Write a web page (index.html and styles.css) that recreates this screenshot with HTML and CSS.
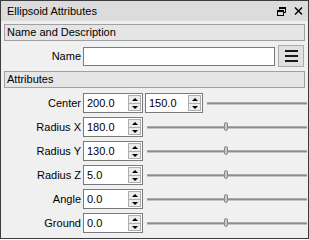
FILE: index.html
```html
<!DOCTYPE html>
<html lang="en">
<head>
  <meta charset="UTF-8" />
  <title>Ellipsoid Attributes</title>
  <link rel="stylesheet" href="styles.css">
</head>
<body>
  <div class="dock">
    <div class="titlebar">
      <span class="title">Ellipsoid Attributes</span>
      <span class="tb-icons">
        <svg width="9" height="9" viewBox="0 0 9 9">
          <path d="M2.5 2.5V0.5h6v5h-2" fill="none" stroke="#000" stroke-width="1"/>
          <rect x="2" y="0" width="7" height="2" fill="#000"/>
          <rect x="0.5" y="3.5" width="6" height="5" fill="none" stroke="#000" stroke-width="1"/>
          <rect x="0" y="3" width="7" height="2" fill="#000"/>
        </svg>
        <svg width="9" height="8" viewBox="0 0 9 8">
          <path d="M1 0.5l7 7M8 0.5l-7 7" stroke="#000" stroke-width="1.4"/>
        </svg>
      </span>
    </div>
    <div class="panel">
      <div class="section">Name and Description</div>
      <div class="row name-row">
        <label class="lbl">Name</label>
        <input class="text-input" type="text">
        <button class="menu-btn">
          <svg width="13" height="12" viewBox="0 0 13 12">
            <rect x="0" y="0" width="13" height="2" fill="#1a1a1a"/>
            <rect x="0" y="5" width="13" height="2" fill="#1a1a1a"/>
            <rect x="0" y="10" width="13" height="2" fill="#1a1a1a"/>
          </svg>
        </button>
      </div>
      <div class="section">Attributes</div>
      <div class="rows">
        <div class="row">
          <label class="lbl">Center</label>
          <div class="spin"><span class="val">200.0</span><span class="spin-btns"><span class="sb up"></span><span class="sb down"></span></span></div>
          <div class="spin narrow"><span class="val">150.0</span><span class="spin-btns"><span class="sb up"></span><span class="sb down"></span></span></div>
          <div class="slider"><span class="groove"></span></div>
        </div>
        <div class="row">
          <label class="lbl">Radius X</label>
          <div class="spin"><span class="val">180.0</span><span class="spin-btns"><span class="sb up"></span><span class="sb down"></span></span></div>
          <div class="slider"><span class="groove"></span><span class="handle"></span></div>
        </div>
        <div class="row">
          <label class="lbl">Radius Y</label>
          <div class="spin"><span class="val">130.0</span><span class="spin-btns"><span class="sb up"></span><span class="sb down"></span></span></div>
          <div class="slider"><span class="groove"></span><span class="handle"></span></div>
        </div>
        <div class="row">
          <label class="lbl">Radius Z</label>
          <div class="spin"><span class="val">5.0</span><span class="spin-btns"><span class="sb up"></span><span class="sb down"></span></span></div>
          <div class="slider"><span class="groove"></span><span class="handle"></span></div>
        </div>
        <div class="row">
          <label class="lbl">Angle</label>
          <div class="spin"><span class="val">0.0</span><span class="spin-btns"><span class="sb up"></span><span class="sb down"></span></span></div>
          <div class="slider"><span class="groove"></span><span class="handle"></span></div>
        </div>
        <div class="row">
          <label class="lbl">Ground</label>
          <div class="spin"><span class="val">0.0</span><span class="spin-btns"><span class="sb up"></span><span class="sb down"></span></span></div>
          <div class="slider"><span class="groove"></span><span class="handle"></span></div>
        </div>
      </div>
    </div>
  </div>
</body>
</html>
```
FILE: styles.css
```css
* { box-sizing:border-box; margin:0; padding:0; }
body {
  background:#ffffff;
  font-family:"Liberation Sans", Arial, sans-serif;
  font-size:11px; color:#000;
}
.dock {
  width:309px; height:239px;
  border:1px solid #3c3c3c;
  background:#f0f0f0;
}
.titlebar {
  height:20px; background:#dcdcdc;
  display:flex; align-items:center;
  justify-content:space-between;
  padding:0 5px 0 6px;
}
.title { line-height:20px; }
.tb-icons { display:flex; align-items:center; gap:8px; }
.tb-icons svg { display:block; }

.panel { padding:3px 3px 0 3px; }
.section {
  height:17px; line-height:15px;
  border:1px solid #a0a0a0;
  background:#e5e5e5;
  padding-left:2px;
}
.row {
  display:flex; align-items:center;
  height:20px;
}
.lbl {
  width:77px; margin-right:2px;
  text-align:right; white-space:nowrap;
}
.name-row { height:22px; margin:4px 0 4px; }
.text-input {
  width:192px; height:19px;
  border:1px solid #7a7a7a; background:#fff;
  outline:none;
}
.menu-btn {
  width:26px; height:22px; margin-left:3px;
  border:1px solid #adadad; background:#e1e1e1;
  display:flex; align-items:center; justify-content:center;
}
.menu-btn svg { display:block; }

.rows {
  display:flex; flex-direction:column; gap:4px;
  margin-top:5px;
}
.spin {
  width:60px; height:20px;
  border:1px solid #7a7a7a; background:#fff;
  display:flex; align-items:center;
  padding:1px 1px 1px 3px;
}
.spin.narrow { width:58px; margin-left:2px; }
.val { flex:1; line-height:16px; }
.spin-btns {
  display:flex; flex-direction:column;
  width:13px; height:16px;
}
.sb {
  flex:1; position:relative;
  border:1px solid #adadad; background:#ececec;
}
.sb.down { border-top:none; }
.sb::after {
  content:""; position:absolute;
  left:3px; width:0; height:0;
  border-left:3px solid transparent;
  border-right:3px solid transparent;
}
.sb.up::after { top:2px; border-bottom:3px solid #000; }
.sb.down::after { top:2px; border-top:3px solid #000; }

.slider {
  flex:1; height:20px; position:relative;
  margin-left:4px; margin-right:-2px;
  display:flex; align-items:center;
}
.groove {
  display:block; width:100%; height:3px;
  background:#8c8c8c;
  border-top:1px solid #a8a8a8;
  border-bottom:1px solid #c4c4c4;
  border-radius:1px;
}
.handle {
  position:absolute; left:48%; top:5px;
  width:4px; height:9px;
  border:1px solid #8a8a8a; border-radius:2px;
  background:#c8c8c8;
}
```
